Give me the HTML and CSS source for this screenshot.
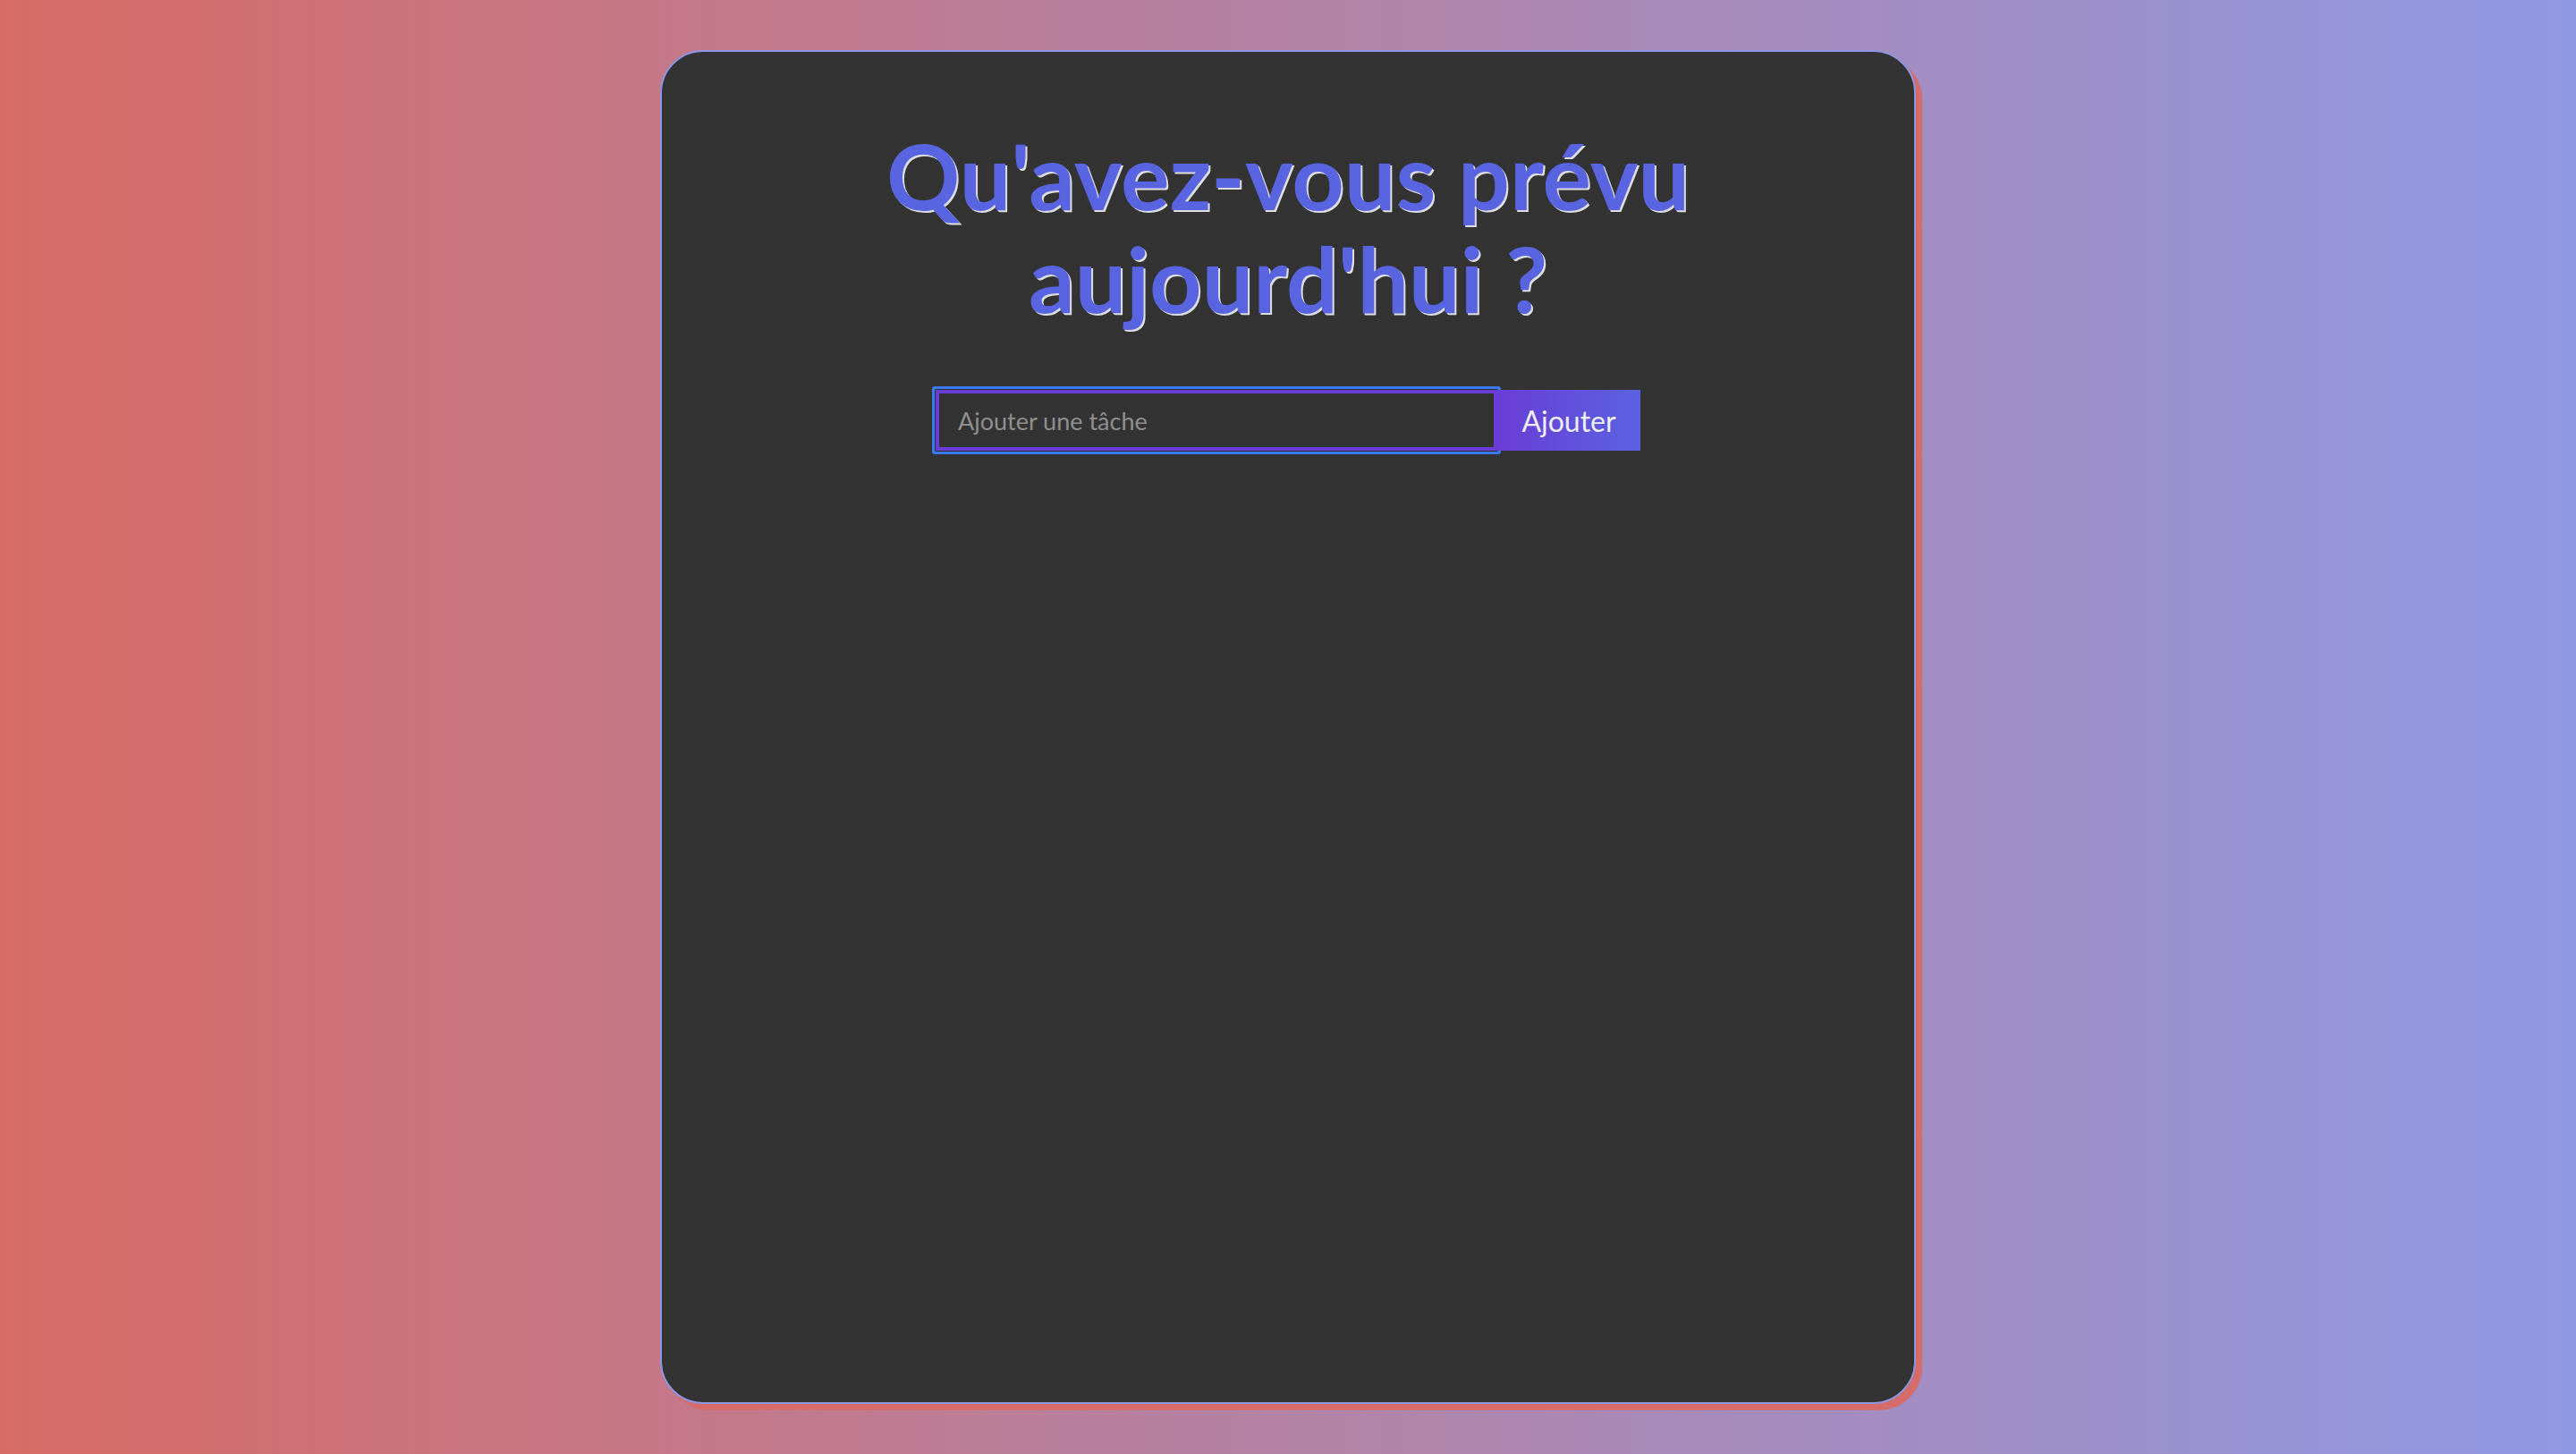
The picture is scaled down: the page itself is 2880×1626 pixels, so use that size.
FILE: index.html
```html
<!DOCTYPE html>
<html lang="fr">
<head>
<meta charset="utf-8">
<title>Todo</title>
<link rel="stylesheet" href="styles.css">
</head>
<body>
  <main class="card">
    <h1 class="title">Qu'avez-vous prévu<br>aujourd'hui ?</h1>
    <form class="todo-form" onsubmit="return false">
      <input class="todo-input" type="text" placeholder="Ajouter une tâche" autofocus>
      <button class="todo-btn" type="submit">Ajouter</button>
    </form>
  </main>
</body>
</html>
```
FILE: styles.css
```css
* { box-sizing: border-box; }
html, body { height: 100%; }
body {
  margin: 0;
  background: linear-gradient(90deg, #d76c67 0%, #8f99e3 100%);
  display: flex;
  justify-content: center;
  align-items: flex-start;
  padding-top: 56px;
  font-family: "Lato", "Liberation Sans", sans-serif;
}
.card {
  width: 1404px;
  height: 1514px;
  background: #333333;
  border: 2px solid #8c96e2;
  border-radius: 48px;
  box-shadow: 7px 7px 0 #d66c69;
  display: flex;
  flex-direction: column;
  align-items: center;
  padding-top: 80px;
}
.title {
  margin: 0;
  font-family: "Lato", "Liberation Sans", sans-serif;
  font-weight: 700;
  font-size: 102px;
  line-height: 115px;
  text-align: center;
  color: #5864e0;
  text-shadow: 2px 2px 0 #dedede;
}
.todo-form {
  display: flex;
  margin-top: 68px;
}
.todo-input {
  width: 628px;
  height: 68px;
  border: 4px solid #6a3dd6;
  background: #333333;
  color: #dddddd;
  caret-color: #ffffff;
  font-family: "Lato", "Liberation Sans", sans-serif;
  font-size: 27px;
  padding: 0 21px;
  outline: none;
  border-radius: 1px;
  box-shadow: 0 0 0 1px #2b2b2b, 0 0 0 4px #3b7bf0;
}
.todo-input::placeholder { color: #8f8f8f; }
.todo-btn {
  width: 160px;
  height: 68px;
  border: none;
  margin: 0;
  padding: 0;
  background: linear-gradient(90deg, #6a3dd6 0%, #5a62e0 100%);
  color: #eeeeee;
  font-family: "Lato", "Liberation Sans", sans-serif;
  font-size: 32px;
  cursor: pointer;
}
```
